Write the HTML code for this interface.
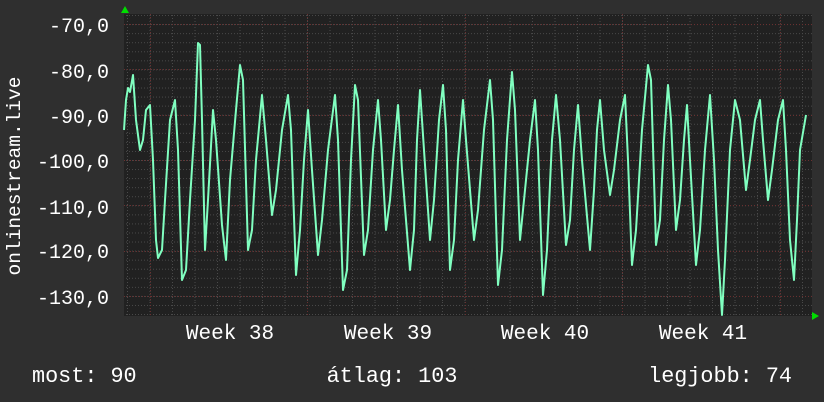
<!DOCTYPE html><html><head><meta charset="utf-8"><style>
body{margin:0;background:#2f2f2f;width:824px;height:402px;overflow:hidden}
svg{position:absolute;left:0;top:0}
text{font-family:"Liberation Mono","DejaVu Sans Mono",monospace;font-size:20px;fill:#fff}
text.t{font-size:19.5px}
text.w{font-size:21px}
text.b{font-size:21.8px}
</style></head><body>
<svg width="824" height="402">
<defs>
<pattern id="mh" x="0" y="6" width="688" height="9.06" patternUnits="userSpaceOnUse"><line x1="0" x2="688" y1="0.5" y2="0.5" stroke="#4a4a4a" stroke-dasharray="1,2"/></pattern>
<pattern id="mv" x="127" y="0" width="22.5" height="302" patternUnits="userSpaceOnUse"><line x1="0.5" x2="0.5" y1="0" y2="302" stroke="#4a4a4a" stroke-dasharray="1,2"/></pattern>
</defs>
<rect x="124" y="14" width="688" height="302" fill="#212121"/>
<rect x="124" y="14" width="688" height="302" fill="url(#mh)"/>
<rect x="124" y="14" width="688" height="302" fill="url(#mv)"/>
<g stroke="#6a3030" stroke-dasharray="1,2">
<line x1="124" x2="812" y1="24.5" y2="24.5"/><line x1="124" x2="812" y1="69.5" y2="69.5"/><line x1="124" x2="812" y1="115.5" y2="115.5"/><line x1="124" x2="812" y1="160.5" y2="160.5"/><line x1="124" x2="812" y1="205.5" y2="205.5"/><line x1="124" x2="812" y1="251.5" y2="251.5"/><line x1="124" x2="812" y1="296.5" y2="296.5"/>
<line y1="14" y2="316" x1="150.5" x2="150.5"/><line y1="14" y2="316" x1="307.5" x2="307.5"/><line y1="14" y2="316" x1="465.5" x2="465.5"/><line y1="14" y2="316" x1="622.5" x2="622.5"/><line y1="14" y2="316" x1="780.5" x2="780.5"/>
</g>
<polyline fill="none" stroke="#80ffc0" stroke-width="2" stroke-linejoin="round" points="124,130 126,100 128,88 130,92 133,75 136,120 140,150 143,140 146,110 150,105 153,160 156,240 158,258 162,250 165,200 170,120 175,100 178,150 182,280 186,270 190,200 195,120 198,43 200,45 202,120 205,250 208,200 213,110 216,140 222,225 226,260 230,180 236,110 240,65 243,80 248,250 252,230 256,160 262,95 266,140 272,215 276,190 282,130 288,95 291,130 296,275 300,230 304,160 308,110 312,170 318,255 322,220 328,150 335,95 338,140 343,290 347,270 351,160 355,85 358,100 364,255 368,230 373,150 378,100 381,140 386,230 390,200 394,150 398,105 402,170 410,270 414,230 417,140 420,90 424,150 430,240 434,200 439,120 443,85 446,130 450,270 454,240 458,160 463,100 466,140 474,240 478,210 484,130 490,80 493,120 498,285 502,250 507,140 512,72 515,110 520,240 524,200 530,140 535,100 538,150 543,295 547,250 552,140 556,95 560,140 566,245 570,220 574,150 578,105 582,160 590,250 594,190 597,130 600,100 604,150 610,195 614,170 620,120 625,95 628,160 632,265 636,230 642,130 648,65 651,80 656,245 660,220 664,140 668,85 671,120 676,230 680,200 684,140 687,105 690,160 696,265 700,230 705,150 710,95 714,160 718,250 722,315 725,260 730,150 735,100 740,120 746,190 750,160 755,120 760,100 763,140 768,200 772,170 778,120 783,100 786,150 790,240 794,280 797,220 800,150 806,115"/>
<polygon points="121,13 129,13 125,6" fill="#00dd00"/>
<polygon points="812,312 812,320 819,316" fill="#00dd00"/>
<g text-anchor="end">
<text x="109" y="32">-70,0</text><text x="109" y="78">-80,0</text><text x="109" y="123">-90,0</text>
<text x="109" y="168">-100,0</text><text x="109" y="214">-110,0</text><text x="109" y="258">-120,0</text><text x="109" y="304">-130,0</text>
</g>
<text class="t" transform="translate(20,176) rotate(-90)" text-anchor="middle">onlinestream.live</text>
<g text-anchor="middle"><text class="w" x="230" y="339">Week 38</text><text class="w" x="388" y="339">Week 39</text><text class="w" x="545" y="339">Week 40</text><text class="w" x="703" y="339">Week 41</text></g>
<text class="b" x="32" y="382">most: 90</text>
<text class="b" x="392" y="382" text-anchor="middle">átlag: 103</text>
<text class="b" x="792" y="382" text-anchor="end">legjobb: 74</text>
</svg>
</body></html>
